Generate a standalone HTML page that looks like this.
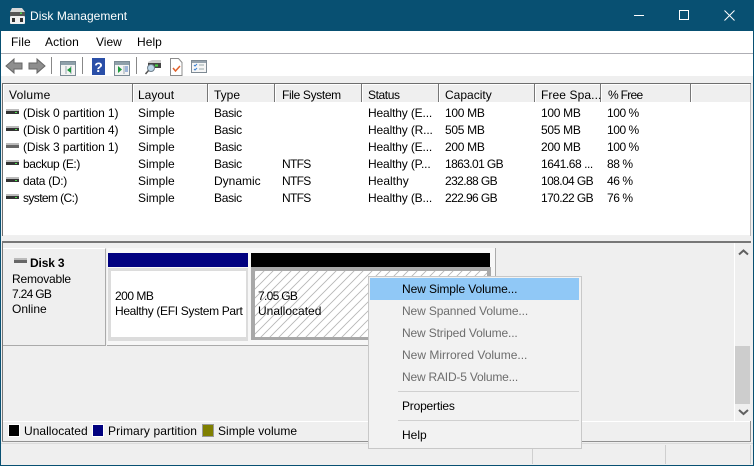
<!DOCTYPE html>
<html><head><meta charset="utf-8"><title>Disk Management</title>
<style>
html,body{margin:0;padding:0;background:#efefef}
#w{position:relative;width:754px;height:466px;overflow:hidden;background:#efefef;font:12px "Liberation Sans",sans-serif;color:#000}
#w div,#w span,#w svg{position:absolute}
.t{white-space:nowrap;line-height:16px;height:16px}
.g{color:#6d6d6d}
.h{top:84px;height:18px;background:#efefef;border-right:1px solid #777;box-shadow:inset 1px 1px 0 #fff;box-sizing:border-box}
.n{letter-spacing:-.45px}
.b{letter-spacing:-.3px}
.y{letter-spacing:-.15px}
.f{letter-spacing:-.7px}
</style></head><body>
<div id="w">
<div style="left:0;top:0;width:754px;height:31px;background:#085072"></div>
<div style="left:0;top:0;width:1px;height:466px;background:#085072"></div>
<div style="left:753px;top:0;width:1px;height:466px;background:#085072"></div>
<div style="left:0;top:465px;width:754px;height:1px;background:#085072"></div>

<svg style="left:9px;top:7px" width="18" height="18" viewBox="0 0 18 18"><path d="M3 1h10l3 4v3H1V5z" fill="#d8d8d8"/><rect x="1" y="5" width="15" height="4" fill="#555"/><rect x="11" y="5.5" width="2" height="1.5" fill="#4ddc4d"/><rect x="1" y="9" width="15" height="8" rx="1" fill="#f0f0f0"/><rect x="3" y="11" width="3" height="4" fill="#333"/><rect x="11" y="11" width="3" height="4" fill="#333"/></svg>
<span class="t" style="left:30px;top:8px;color:#fff;letter-spacing:.03px">Disk Management</span>
<div style="left:634px;top:15px;width:10px;height:1px;background:#fff"></div>
<div style="left:679px;top:10px;width:8px;height:8px;border:1px solid #fff"></div>
<svg style="left:724px;top:10px" width="11" height="11"><path d="M.5.5l10 10M10.500.5l-10 10" stroke="#fff" fill="none"/></svg>

<div style="left:1px;top:31px;width:752px;height:22px;background:#fff"></div>
<div style="left:1px;top:53px;width:752px;height:1px;background:#aeaeb4"></div>
<div style="left:1px;top:54px;width:752px;height:22px;background:#fff"></div>
<span class="t" style="left:11px;top:34px;letter-spacing:.1px">File</span>
<span class="t" style="left:45px;top:34px;letter-spacing:.1px">Action</span>
<span class="t" style="left:96px;top:34px;letter-spacing:0">View</span>
<span class="t" style="left:137px;top:34px;letter-spacing:.05px">Help</span>

<svg style="left:0;top:54px" width="220" height="24" viewBox="0 0 220 24">
<path d="M6 12l8-7v4h8v6h-8v4z" fill="#8e8e8e" stroke="#666"/>
<path d="M45 12l-8-7v4h-8v6h8v4z" fill="#8e8e8e" stroke="#666"/>
<rect x="51" y="3" width="1" height="17" fill="#888"/>
<rect x="60.500" y="7.500" width="15" height="14" fill="#f4f4f4" stroke="#7b8a94"/><rect x="61" y="8" width="14" height="3" fill="#8fa0aa"/><path d="M66 12v8M71 12v8" stroke="#9aa8b2"/><path d="M72 13v6l-4-3z" fill="#1d9a3c" transform="translate(-1 0)"/>
<rect x="82" y="3" width="1" height="17" fill="#888"/>
<rect x="92" y="4" width="13" height="17" fill="#2a4fa8"/><text x="98.500" y="18" font-size="14" font-weight="bold" fill="#fff" text-anchor="middle" font-family="Liberation Sans">?</text>
<rect x="114.500" y="7.500" width="15" height="14" fill="#f4f4f4" stroke="#7b8a94"/><rect x="115" y="8" width="14" height="3" fill="#8fa0aa"/><path d="M124 12v8" stroke="#9aa8b2"/><path d="M118 12v7l4-3.500z" fill="#1d9a3c"/><path d="M125 13h3M125 15h3M125 17h3" stroke="#4a78c0"/>
<rect x="136" y="3" width="1" height="17" fill="#888"/>
<path d="M148 8l4-2h9l0 7h-13z" fill="#ccc"/><rect x="148" y="9" width="13" height="5" fill="#444"/><rect x="155" y="10.500" width="3" height="2" fill="#44d844"/><circle cx="151" cy="14" r="3.500" fill="#bcd6e8" stroke="#6f7f8c"/><path d="M148.500 16.500l-3 3.500" stroke="#555" stroke-width="1.500"/>
<path d="M170.500 4.500h8l3.500 4v13h-11.500z" fill="#fff" stroke="#8c8c8c"/><path d="M173 14l2.500 3 4.500-5" stroke="#e0602a" stroke-width="1.500" fill="none"/>
<rect x="191.500" y="6.500" width="15" height="12" fill="#f6f6f6" stroke="#7e8a94"/><rect x="192" y="7" width="14" height="2" fill="#97a4ae"/><path d="M194 11l1 1 2-2M194 15l1 1 2-2" stroke="#3a7fd0" fill="none"/><path d="M199 11h5M199 15h5" stroke="#9aa"/>
</svg>

<div style="left:1px;top:76px;width:752px;height:7px;background:#efefef"></div>
<div style="left:2px;top:83px;width:749px;height:1px;background:#6e6e6e"></div>
<div class="h" style="left:3px;width:130px"></div>
<div class="h" style="left:133px;width:75px"></div>
<div class="h" style="left:208px;width:67px"></div>
<div class="h" style="left:275px;width:87px"></div>
<div class="h" style="left:362px;width:77px"></div>
<div class="h" style="left:439px;width:96px"></div>
<div class="h" style="left:535px;width:66px"></div>
<div class="h" style="left:601px;width:90px"></div>
<div class="h" style="left:691px;width:60px"></div>
<div style="left:2px;top:84px;width:1px;height:152px;background:#6e6e6e"></div>
<div style="left:3px;top:102px;width:748px;height:134px;background:#fff"></div>
<div style="left:750px;top:84px;width:1px;height:152px;background:#bbb"></div>

<span class="t" style="left:9px;top:87px;letter-spacing:.25px">Volume</span>
<span class="t" style="left:138px;top:87px">Layout</span>
<span class="t" style="left:214px;top:87px">Type</span>
<span class="t" style="left:282px;top:87px;letter-spacing:-.35px">File System</span>
<span class="t" style="left:368px;top:87px;letter-spacing:-.4px">Status</span>
<span class="t" style="left:445px;top:87px">Capacity</span>
<span class="t" style="left:541px;top:87px;letter-spacing:.1px">Free Spa...</span>
<span class="t" style="left:608px;top:87px;letter-spacing:-.7px">% Free</span>

<svg style="left:6px;top:105px" width="15" height="100" viewBox="0 0 15 100">
<g><rect y="4" width="13" height="2" fill="#bbb"/><rect y="6" width="13" height="3" fill="#333"/><rect x="9" y="7" width="2" height="1" fill="#4ee04e"/></g>
<g transform="translate(0 17)"><rect y="4" width="13" height="2" fill="#bbb"/><rect y="6" width="13" height="3" fill="#333"/><rect x="9" y="7" width="2" height="1" fill="#4ee04e"/></g>
<g transform="translate(0 34)"><rect y="4" width="13" height="2" fill="#bbb"/><rect y="6" width="13" height="3" fill="#666"/></g>
<g transform="translate(0 51)"><rect y="4" width="13" height="2" fill="#bbb"/><rect y="6" width="13" height="3" fill="#333"/><rect x="9" y="7" width="2" height="1" fill="#4ee04e"/></g>
<g transform="translate(0 68)"><rect y="4" width="13" height="2" fill="#bbb"/><rect y="6" width="13" height="3" fill="#333"/><rect x="9" y="7" width="2" height="1" fill="#4ee04e"/></g>
<g transform="translate(0 85)"><rect y="4" width="13" height="2" fill="#bbb"/><rect y="6" width="13" height="3" fill="#333"/><rect x="9" y="7" width="2" height="1" fill="#4ee04e"/></g>
</svg>

<span class="t" style="left:23px;top:105px;letter-spacing:-.1px">(Disk 0 partition 1)</span><span class="t" style="left:138px;top:105px">Simple</span><span class="t b" style="left:214px;top:105px">Basic</span><span class="t y" style="left:368px;top:105px">Healthy (E...</span><span class="t b" style="left:445px;top:105px">100 MB</span><span class="t b" style="left:541px;top:105px">100 MB</span><span class="t n" style="left:607px;top:105px">100 %</span>
<span class="t" style="left:23px;top:122px;letter-spacing:-.1px">(Disk 0 partition 4)</span><span class="t" style="left:138px;top:122px">Simple</span><span class="t b" style="left:214px;top:122px">Basic</span><span class="t y" style="left:368px;top:122px">Healthy (R...</span><span class="t b" style="left:445px;top:122px">505 MB</span><span class="t b" style="left:541px;top:122px">505 MB</span><span class="t n" style="left:607px;top:122px">100 %</span>
<span class="t" style="left:23px;top:139px;letter-spacing:-.1px">(Disk 3 partition 1)</span><span class="t" style="left:138px;top:139px">Simple</span><span class="t b" style="left:214px;top:139px">Basic</span><span class="t y" style="left:368px;top:139px">Healthy (E...</span><span class="t b" style="left:445px;top:139px">200 MB</span><span class="t b" style="left:541px;top:139px">200 MB</span><span class="t n" style="left:607px;top:139px">100 %</span>
<span class="t" style="left:23px;top:156px;letter-spacing:-.4px">backup (E:)</span><span class="t" style="left:138px;top:156px">Simple</span><span class="t b" style="left:214px;top:156px">Basic</span><span class="t f" style="left:282px;top:156px">NTFS</span><span class="t y" style="left:368px;top:156px">Healthy (P...</span><span class="t" style="left:445px;top:156px;letter-spacing:-.6px">1863.01 GB</span><span class="t n" style="left:541px;top:156px">1641.68 ...</span><span class="t n" style="left:607px;top:156px">88 %</span>
<span class="t" style="left:23px;top:173px;letter-spacing:-.3px">data (D:)</span><span class="t" style="left:138px;top:173px">Simple</span><span class="t" style="left:214px;top:173px">Dynamic</span><span class="t f" style="left:282px;top:173px">NTFS</span><span class="t" style="left:368px;top:173px">Healthy</span><span class="t" style="left:445px;top:173px;letter-spacing:-.6px">232.88 GB</span><span class="t" style="left:541px;top:173px;letter-spacing:-.6px">108.04 GB</span><span class="t n" style="left:607px;top:173px">46 %</span>
<span class="t" style="left:23px;top:190px;letter-spacing:-.6px">system (C:)</span><span class="t" style="left:138px;top:190px">Simple</span><span class="t b" style="left:214px;top:190px">Basic</span><span class="t f" style="left:282px;top:190px">NTFS</span><span class="t y" style="left:368px;top:190px">Healthy (B...</span><span class="t" style="left:445px;top:190px;letter-spacing:-.6px">222.96 GB</span><span class="t" style="left:541px;top:190px;letter-spacing:-.6px">170.22 GB</span><span class="t n" style="left:607px;top:190px">76 %</span>

<div style="left:3px;top:235px;width:747px;height:1px;background:#f0f0f0"></div>
<div style="left:2px;top:241px;width:749px;height:2px;background:#777"></div>
<div style="left:2px;top:241px;width:1px;height:201px;background:#777"></div>
<div style="left:3px;top:243px;width:747px;height:178px;background:#efefef"></div>

<div style="left:3px;top:248px;width:103px;height:98px;background:#efefef;border-top:1px solid #fff;border-right:1px solid #aaa;border-bottom:1px solid #aaa;box-sizing:border-box"></div>
<svg style="left:14px;top:258px" width="14" height="8"><rect width="13" height="2" fill="#bbb"/><rect y="2" width="13" height="3" fill="#666"/></svg>
<span class="t" style="left:30px;top:255px;font-weight:bold;letter-spacing:-.15px">Disk 3</span>
<span class="t" style="left:12px;top:271px;letter-spacing:-.2px">Removable</span>
<span class="t f" style="left:12px;top:286px">7.24 GB</span>
<span class="t" style="left:12px;top:301px">Online</span>

<div style="left:107px;top:248px;width:389px;height:98px;background:#f7f7f7;border-right:1px solid #aaa;border-bottom:1px solid #aaa;box-sizing:border-box"></div>
<div style="left:108px;top:253px;width:140px;height:14px;background:#00007f"></div>
<div style="left:251px;top:253px;width:239px;height:14px;background:#000"></div>
<div style="left:108px;top:268px;width:140px;height:73px;background:#dcdcdc"></div>
<div style="left:111px;top:271px;width:135px;height:66px;background:#fff"></div>
<span class="t" style="left:115px;top:288px;letter-spacing:-.5px">200 MB</span>
<span class="t" style="left:115px;top:303px;letter-spacing:-.33px">Healthy (EFI System Part</span>

<div style="left:251px;top:267px;width:240px;height:73px;background:#a8a8a8"></div>
<svg style="left:255px;top:271px" width="232" height="66"><defs><pattern id="p" width="9" height="9" patternUnits="userSpaceOnUse"><rect width="9" height="9" fill="#fff"/><path d="M-1 10L10-1M-5 5L5-5M4 14L14 4" stroke="#b4b4b4" stroke-width=".8" fill="none"/></pattern></defs><rect width="232" height="66" fill="url(#p)"/></svg>
<span class="t f" style="left:258px;top:288px">7.05 GB</span>
<span class="t" style="left:258px;top:303px">Unallocated</span>

<div style="left:734px;top:243px;width:1px;height:178px;background:#fff"></div>
<div style="left:735px;top:346px;width:15px;height:58px;background:#cdcdcd"></div>
<svg style="left:738px;top:248px" width="11" height="9"><path d="M1 6.500l4.500-4 4.500 4" stroke="#606060" stroke-width="2" fill="none"/></svg>
<svg style="left:738px;top:408px" width="11" height="9"><path d="M1 2l4.500 4 4.500-4" stroke="#606060" stroke-width="2" fill="none"/></svg>

<div style="left:3px;top:421px;width:747px;height:1px;background:#fff"></div>
<div style="left:8px;top:424px;width:10px;height:11px;background:#000;border:1px solid #fff"></div>
<span class="t" style="left:24px;top:423px;letter-spacing:.03px">Unallocated</span>
<div style="left:92px;top:424px;width:10px;height:11px;background:#00007f;border:1px solid #fff"></div>
<span class="t" style="left:108px;top:423px;letter-spacing:.1px">Primary partition</span>
<div style="left:202px;top:424px;width:10px;height:11px;background:#7f7f00;border:1px solid #999"></div>
<span class="t" style="left:218px;top:423px;letter-spacing:.03px">Simple volume</span>
<div style="left:2px;top:441px;width:749px;height:1px;background:#919191"></div>
<div style="left:750px;top:421px;width:1px;height:21px;background:#919191"></div>
<div style="left:1px;top:443px;width:752px;height:1px;background:#dcdcdc"></div>
<div style="left:665px;top:445px;width:1px;height:19px;background:#cfcfcf"></div>
<div style="left:750px;top:445px;width:1px;height:19px;background:#cfcfcf"></div>
<div style="left:532px;top:449px;width:1px;height:15px;background:#cfcfcf"></div>

<div style="left:368px;top:276px;width:214px;height:173px;background:#f2f2f2;border:1px solid #c8c8c8;box-sizing:border-box"></div>
<div style="left:370px;top:278px;width:209px;height:22px;background:#90c8f6"></div>
<span class="t" style="left:402px;top:281px;letter-spacing:-.1px">New Simple Volume...</span>
<span class="t g" style="left:402px;top:303px;letter-spacing:-.13px">New Spanned Volume...</span>
<span class="t g" style="left:402px;top:325px;letter-spacing:-.15px">New Striped Volume...</span>
<span class="t g" style="left:402px;top:347px;letter-spacing:0">New Mirrored Volume...</span>
<span class="t g" style="left:402px;top:369px;letter-spacing:-.2px">New RAID-5 Volume...</span>
<div style="left:398px;top:391px;width:181px;height:1px;background:#d0d0d0"></div>
<span class="t" style="left:402px;top:398px;letter-spacing:-.2px">Properties</span>
<div style="left:398px;top:420px;width:181px;height:1px;background:#d0d0d0"></div>
<span class="t" style="left:402px;top:427px">Help</span>
</div>
</body></html>
